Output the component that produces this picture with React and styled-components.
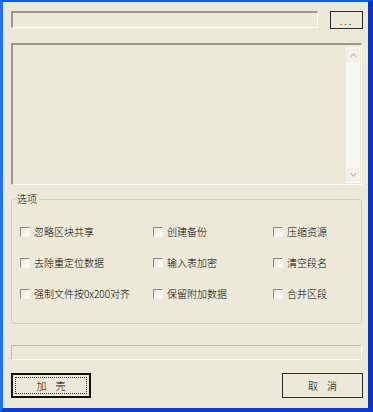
import React from "react";
import styled, { createGlobalStyle } from "styled-components";

const GlobalStyle = createGlobalStyle`
  html, body {
    margin: 0;
    padding: 0;
    background: #ece9d8;
  }
  body {
    font-family: "Noto Sans CJK SC", "Liberation Sans", sans-serif;
    font-size: 10px;
    color: #000;
  }
`;

const Window = styled.div`
  box-sizing: border-box;
  width: 373px;
  height: 412px;
  display: flex;
  flex-direction: column;
  background: #ece9d8;
  border-top: 2px solid #0a5fe8;
  border-left: 3px solid #2b6fe6;
  border-right: 5px solid #0831d9;
  border-bottom: 4px solid #0a3fd6;
  padding: 9px 6px 0 8px;
`;

const Sunken = styled.div`
  box-sizing: border-box;
  background: #ece9d8;
  border-top: 2px solid #9d9987;
  border-left: 2px solid #9d9987;
  border-right: 1px solid #fffff8;
  border-bottom: 1px solid #fffff8;
`;

const PathRow = styled.div`
  display: flex;
  align-items: flex-start;
  gap: 12px;
  height: 18px;
  margin-right: -1px;
`;

const PathField = styled(Sunken)`
  flex: 1;
  height: 17px;
`;

const Button = styled.button`
  box-sizing: border-box;
  width: ${(p) => p.$width}px;
  height: ${(p) => p.$height}px;
  padding: 0;
  background: #ece9d8;
  border: ${(p) => (p.$default ? "2px solid #111" : "1px solid #2a2a2a")};
  font-family: "Noto Sans CJK SC", "Liberation Sans", sans-serif;
  font-size: 10px;
  font-weight: 300;
  color: #000;
  display: flex;
  align-items: center;
  justify-content: center;
  letter-spacing: ${(p) => p.$spacing || 0}px;
`;

const FocusRing = styled.span`
  box-sizing: border-box;
  display: flex;
  align-items: center;
  justify-content: center;
  width: calc(100% - 4px);
  height: calc(100% - 4px);
  border: 1px dotted #333;
`;

const Log = styled(Sunken)`
  margin-top: 14px;
  height: 142px;
  display: flex;
  justify-content: flex-end;
  padding: 2px 1px 1px 0;
`;

const ScrollBar = styled.div`
  width: 14px;
  display: flex;
  flex-direction: column;
  justify-content: space-between;
  background: #f7f7f2;
`;

const ScrollButton = styled.div`
  box-sizing: border-box;
  height: 13px;
  margin: 2px 1px;
  border: 1px solid #eeede5;
  background: #f3f2ec;
  display: flex;
  align-items: center;
  justify-content: center;
`;

const Group = styled.fieldset`
  margin: 8px 0 0 0;
  height: 131px;
  box-sizing: border-box;
  padding: 0;
  border: 1px solid #d0cfbf;
  border-radius: 3px;
  min-width: 0;
`;

const Legend = styled.legend`
  margin-left: 3px;
  padding: 0 2px;
  line-height: 12px;
  font-size: 10px;
  font-weight: 300;
`;

const OptionGrid = styled.div`
  display: grid;
  grid-template-columns: 133px 120px 1fr;
  grid-auto-rows: 31px;
  padding: 11px 0 0 8px;
`;

const Option = styled.label`
  display: flex;
  align-items: center;
  gap: 4px;
  white-space: nowrap;
  font-weight: 300;
`;

const Box = styled.span`
  box-sizing: border-box;
  width: 10px;
  height: 10px;
  flex: none;
  border-top: 1px solid #8e8c7f;
  border-left: 1px solid #8e8c7f;
  border-right: 1px solid #f4f3ee;
  border-bottom: 1px solid #f4f3ee;
  background: linear-gradient(135deg, #e6e4da, #ffffff);
`;

const Progress = styled(Sunken)`
  margin-top: 21px;
  height: 15px;
  border-width: 1px;
  border-color: #bdbaa6 #fffff8 #fffff8 #bdbaa6;
`;

const ButtonRow = styled.div`
  display: flex;
  justify-content: space-between;
  margin-top: 13px;
  margin-right: -1px;
`;

const Chevron = ({ down }) => (
  <svg width="7" height="5" viewBox="0 0 7 5">
    <path
      d={down ? "M0.5 1 L3.5 4 L6.5 1" : "M0.5 4 L3.5 1 L6.5 4"}
      fill="none"
      stroke="#c4c3b6"
      strokeWidth="1.4"
    />
  </svg>
);

const options = [
  "忽略区块共享",
  "创建备份",
  "压缩资源",
  "去除重定位数据",
  "输入表加密",
  "清空段名",
  "强制文件按0x200对齐",
  "保留附加数据",
  "合并区段",
];

export default function App() {
  return (
    <>
      <GlobalStyle />
      <Window>
        <PathRow>
          <PathField />
          <Button $width={33} $height={18} $spacing={2}>
            ...
          </Button>
        </PathRow>

        <Log>
          <ScrollBar>
            <ScrollButton>
              <Chevron />
            </ScrollButton>
            <ScrollButton>
              <Chevron down />
            </ScrollButton>
          </ScrollBar>
        </Log>

        <Group>
          <Legend>选项</Legend>
          <OptionGrid>
            {options.map((text) => (
              <Option key={text}>
                <Box />
                {text}
              </Option>
            ))}
          </OptionGrid>
        </Group>

        <Progress />

        <ButtonRow>
          <Button $default $width={80} $height={25}>
            <FocusRing>加&nbsp;&nbsp;&nbsp;&nbsp;壳</FocusRing>
          </Button>
          <Button $width={81} $height={25}>
            取&nbsp;&nbsp;&nbsp;&nbsp;消
          </Button>
        </ButtonRow>
      </Window>
    </>
  );
}
